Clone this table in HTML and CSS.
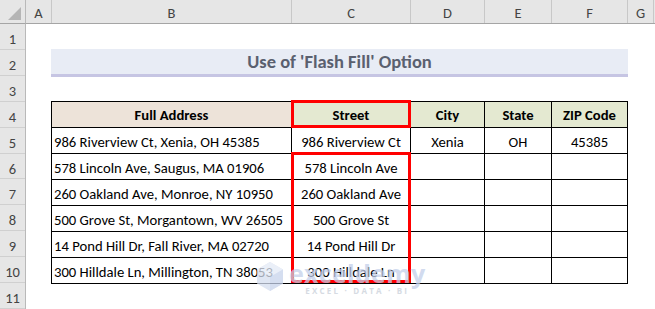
FILE: index.html
```html
<!DOCTYPE html>
<html lang="en">
<head>
    <meta charset="UTF-8">
    <title>Use of 'Flash Fill' Option</title>
    <link rel="stylesheet" href="styles.css">
</head>
<body>
    <div class="sheet">
        <div class="corner"><span class="select-all"></span></div>

        <div class="col-heads">
            <div class="col-head col-a">A</div>
            <div class="col-head col-b">B</div>
            <div class="col-head col-c">C</div>
            <div class="col-head col-d">D</div>
            <div class="col-head col-e">E</div>
            <div class="col-head col-f">F</div>
            <div class="col-head col-g">G</div>
            <div class="col-head col-rest"></div>
        </div>

        <div class="row-heads">
            <div class="row-head">1</div>
            <div class="row-head">2</div>
            <div class="row-head">3</div>
            <div class="row-head">4</div>
            <div class="row-head">5</div>
            <div class="row-head">6</div>
            <div class="row-head">7</div>
            <div class="row-head">8</div>
            <div class="row-head">9</div>
            <div class="row-head">10</div>
            <div class="row-head">11</div>
        </div>

        <div class="cells">
            <div class="title">Use of 'Flash Fill' Option</div>

            <div class="table-wrap">
                <div class="table">
                    <div class="th th-address">Full Address</div>
                    <div class="th">Street</div>
                    <div class="th">City</div>
                    <div class="th">State</div>
                    <div class="th">ZIP Code</div>

                    <div class="td left">986 Riverview Ct, Xenia, OH 45385</div>
                    <div class="td">986 Riverview Ct</div>
                    <div class="td">Xenia</div>
                    <div class="td">OH</div>
                    <div class="td">45385</div>

                    <div class="td left">578 Lincoln Ave, Saugus, MA 01906</div>
                    <div class="td">578 Lincoln Ave</div>
                    <div class="td"></div>
                    <div class="td"></div>
                    <div class="td"></div>

                    <div class="td left">260 Oakland Ave, Monroe, NY 10950</div>
                    <div class="td">260 Oakland Ave</div>
                    <div class="td"></div>
                    <div class="td"></div>
                    <div class="td"></div>

                    <div class="td left">500 Grove St, Morgantown, WV 26505</div>
                    <div class="td">500 Grove St</div>
                    <div class="td"></div>
                    <div class="td"></div>
                    <div class="td"></div>

                    <div class="td left">14 Pond Hill Dr, Fall River, MA 02720</div>
                    <div class="td">14 Pond Hill Dr</div>
                    <div class="td"></div>
                    <div class="td"></div>
                    <div class="td"></div>

                    <div class="td left">300 Hilldale Ln, Millington, TN 38053</div>
                    <div class="td">300 Hilldale Ln</div>
                    <div class="td"></div>
                    <div class="td"></div>
                    <div class="td"></div>
                </div>

                <!-- highlighted ranges -->
                <div class="pick pick-head"></div>
                <div class="pick pick-fill"></div>

                <div class="watermark">
                    <svg class="wm-logo" width="28" height="31" viewBox="0 0 28 31">
                        <polygon points="14,1 27,8.5 27,22.5 14,30 1,22.5 1,8.5" fill="#d5def0"/>
                        <polygon points="14,1 27,8.5 14,16 1,8.5" fill="#e4eaf6"/>
                        <polygon points="14,16 27,8.5 27,22.5 14,30" fill="#c7d3ec"/>
                    </svg>
                    <div class="wm-text">
                        <div class="wm-name">exceldemy</div>
                        <div class="wm-tag">EXCEL · DATA · BI</div>
                    </div>
                </div>
            </div>
        </div>
    </div>
</body>
</html>
```

FILE: styles.css
```css
body {
    margin: 0;
    background: #fff;
    font-family: "Carlito", "Lato", sans-serif;
    color: #000;
}
.sheet {
    display: grid;
    grid-template-columns: 26px 629px;
    grid-template-rows: 24px 285px;
    width: 655px;
    height: 309px;
    overflow: hidden;
}

/* headers */
.corner {
    position: relative;
    background: #e6e6e6;
    border-right: 1px solid #b9b9b9;
    border-bottom: 1px solid #a5a5a5;
}
.select-all {
    position: absolute;
    right: 4px;
    bottom: 3px;
    width: 0;
    height: 0;
    border-left: 13px solid transparent;
    border-bottom: 13px solid #b5b5b5;
}
.col-heads {
    display: flex;
    background: #e6e6e6;
    border-bottom: 1px solid #a5a5a5;
}
.col-head {
    box-sizing: border-box;
    height: 23px;
    padding-top: 5px;
    text-align: center;
    font-size: 14.5px;
    line-height: 17px;
    color: #444;
    border-right: 1px solid #c8c8c8;
}
.col-a { width: 26px; }
.col-b { width: 240px; }
.col-c { width: 119px; }
.col-d { width: 74px; }
.col-e { width: 67px; }
.col-f { width: 76px; }
.col-g { width: 26px; }
.col-rest { flex: 1; border-right: none; }

.row-heads {
    display: flex;
    flex-direction: column;
    background: #e6e6e6;
    border-right: 1px solid #b9b9b9;
}
.row-head {
    box-sizing: border-box;
    height: 26px;
    padding-top: 7px;
    text-align: center;
    font-size: 14.5px;
    line-height: 17px;
    color: #444;
    border-bottom: 1px solid #d0d0d0;
}

/* worksheet body */
.cells {
    padding: 25px 0 0 25px;
}
.title {
    box-sizing: border-box;
    width: 577px;
    height: 28px;
    background: #e8ecf5;
    border-bottom: 3px solid #c6c5e3;
    text-align: center;
    font-weight: bold;
    font-size: 18.5px;
    line-height: 25px;
    color: #5a606f;
}
.table-wrap {
    position: relative;
    margin-top: 24px;
    width: 577px;
}
.table {
    display: grid;
    grid-template-columns: 239px 118px 73px 66px 75px;
    grid-auto-rows: 25px;
    gap: 1px;
    padding: 1px;
    background: #000;
}
.th, .td {
    background: #fff;
    text-align: center;
    font-size: 14.67px;
    line-height: 18px;
    padding-top: 5px;
    box-sizing: border-box;
    white-space: nowrap;
    overflow: hidden;
}
.th {
    background: #e4e9d1;
    font-weight: bold;
    padding-top: 4px;
}
.th-address {
    background: #ede3d9;
}
.td.left {
    text-align: left;
    padding-left: 2px;
}

.pick {
    position: absolute;
    box-sizing: border-box;
    left: 240px;
    width: 120px;
    border: 3px solid #ff0000;
}
.pick-head {
    top: -1px;
    height: 28px;
}
.pick-fill {
    top: 51px;
    height: 131px;
}

/* faint brand mark over the lower rows */
.watermark {
    position: absolute;
    left: 205px;
    top: 160px;
    display: flex;
    align-items: flex-start;
    gap: 5px;
    opacity: 0.75;
}
.wm-text {
    display: flex;
    flex-direction: column;
    align-items: center;
}
.wm-name {
    font-family: "Open Sans", sans-serif;
    font-weight: bold;
    font-size: 25px;
    line-height: 24px;
    color: #c3d0ea;
    letter-spacing: 0.3px;
}
.wm-tag {
    font-family: "Open Sans", sans-serif;
    font-weight: bold;
    font-size: 8px;
    line-height: 10px;
    letter-spacing: 2.2px;
    color: #c9cfd9;
    margin-top: 1px;
}
```
